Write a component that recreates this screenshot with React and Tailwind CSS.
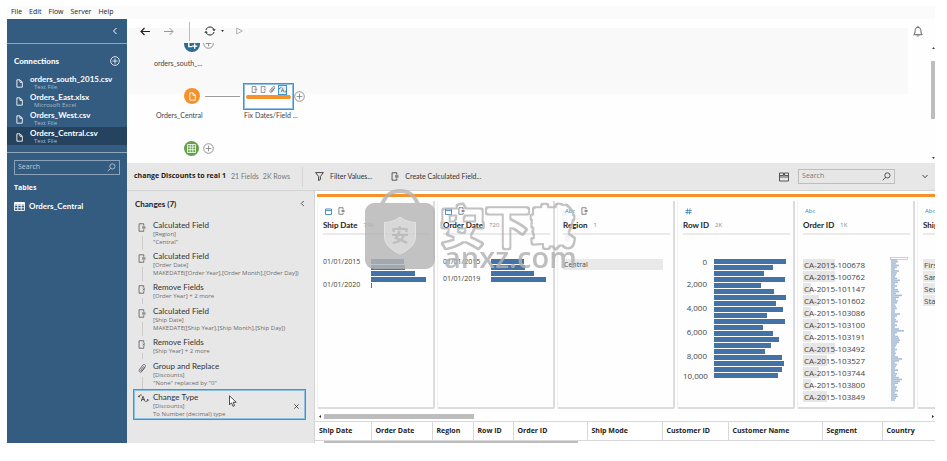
import React from "react";

const files = [
  { name: "orders_south_2015.csv", kind: "Text File" },
  { name: "Orders_East.xlsx", kind: "Microsoft Excel" },
  { name: "Orders_West.csv", kind: "Text File" },
  { name: "Orders_Central.csv", kind: "Text File", selected: true },
];

const changes = [
  { icon: "calc", title: "Calculated Field", lines: ["[Region]", '"Central"'] },
  { icon: "calc", title: "Calculated Field", lines: ["[Order Date]", "MAKEDATE([Order Year],[Order Month],[Order Day])"] },
  { icon: "remove", title: "Remove Fields", lines: ["[Order Year] + 2 more"] },
  { icon: "calc", title: "Calculated Field", lines: ["[Ship Date]", "MAKEDATE([Ship Year],[Ship Month],[Ship Day])"] },
  { icon: "remove", title: "Remove Fields", lines: ["[Ship Year] + 2 more"] },
  { icon: "clip", title: "Group and Replace", lines: ["[Discounts]", '"None" replaced by "0"'] },
];

const rowIdBars = [72, 59, 50, 71, 47, 60, 72, 62, 69, 53, 71, 49, 59, 65, 57, 51, 68, 70, 68, 64];
const rowIdLabels = [
  ["0", "mt-0"],
  ["2,000", "mt-[12px]"],
  ["4,000", "mt-[14px]"],
  ["6,000", "mt-[14px]"],
  ["8,000", "mt-[14px]"],
  ["10,000", "mt-[10px]"],
];

const orderIds = [
  ["CA-2015-100678", 32],
  ["CA-2015-100762", 32],
  ["CA-2015-101147", 8],
  ["CA-2015-101602", 16],
  ["CA-2015-103086", 8],
  ["CA-2015-103100", 16],
  ["CA-2015-103191", 8],
  ["CA-2015-103492", 32],
  ["CA-2015-103527", 24],
  ["CA-2015-103744", 16],
  ["CA-2015-103800", 8],
  ["CA-2015-103849", 24],
];

const overview = [
  6, 7, 5, 8, 6, 4, 8, 6, 5, 4, 6, 9, 7, 4, 6, 3, 7, 8, 5, 11, 8, 5, 7, 6, 3, 5, 6, 4, 3, 9, 6, 4, 5, 7, 4, 6, 4, 8, 13, 6, 4, 7,
  8, 9, 8, 6, 5, 4, 6, 3, 5, 4, 7, 11, 8, 4, 6, 5, 3, 7, 4, 6, 5, 8, 11, 9, 7, 4, 6, 5, 7, 4, 6, 7, 5, 4,
];

const tableColumns = [
  ["Ship Date", "w-[56px]"],
  ["Order Date", "w-[61px]"],
  ["Region", "w-[41px]"],
  ["Row ID", "w-[40px]"],
  ["Order ID", "w-[74px]"],
  ["Ship Mode", "w-[75px]"],
  ["Customer ID", "w-[66px]"],
  ["Customer Name", "w-[94px]"],
  ["Segment", "w-[60px]"],
  ["Country", ""],
];

function FileIcon({ className = "" }) {
  return (
    <svg className={className} viewBox="0 0 8 10" fill="none" stroke="currentColor" strokeWidth="1">
      <path d="M1 .8h3.6L7.2 3.4v5.8H1z" />
      <path d="M4.5 1v2.6H7" />
    </svg>
  );
}

function CalcIcon({ className = "", remove = false }) {
  return (
    <svg className={className} viewBox="0 0 9 10" fill="none" stroke="currentColor" strokeWidth=".9">
      <path d="M6.5 3V.8H1.2v8.4h5.3V7" />
      {remove ? <path d="M5.2 3.7l2.6 2.6M7.8 3.7L5.2 6.3" /> : <path d="M4.6 5.6h3.8M4.6 4.3h3.8" />}
    </svg>
  );
}

function ClipIcon({ className = "" }) {
  return (
    <svg className={className} viewBox="0 0 10 10" fill="none" stroke="currentColor" strokeWidth=".9" strokeLinecap="round">
      <path d="M7.6 3.8L4.4 8.2C3.7 9.2 2.5 9.4 1.8 8.800S1 7 1.700 6l3.600-4.800C5.900.4 7 .3 7.700.8s.7 1.500.2 2.300L4.600 7.500c-.4.500-1 .6-1.300.3s-.3-.8 0-1.200L6 2.900" />
    </svg>
  );
}

function TypeIcon({ className = "" }) {
  return (
    <svg className={className} viewBox="0 0 12 10" fill="none" stroke="currentColor" strokeWidth=".9">
      <path d="M3.500 8L5.400 2.500 7.600 8M4.200 6.200h2.700M.8 3.200C1.200 1.300 2.800.6 4.200 1.300M10.800 6.200c0 1.600-1 2.400-2.600 2.300M.4 2l.5 1.400 1.200-.7M11.500 7.300l-.6-1.200-1.200.8" />
    </svg>
  );
}

function PlusCircle({ className = "" }) {
  return (
    <svg className={className} viewBox="0 0 11 11" fill="none" stroke="currentColor" strokeWidth=".9">
      <circle cx="5.500" cy="5.500" r="4.800" />
      <path d="M5.500 2.700v5.600M2.700 5.500h5.600" />
    </svg>
  );
}

function SearchIcon({ className = "" }) {
  return (
    <svg className={className} viewBox="0 0 10 10" fill="none" stroke="currentColor" strokeWidth=".9">
      <circle cx="6" cy="3.800" r="2.900" />
      <path d="M3.900 5.900L.8 9.200" />
    </svg>
  );
}

function Chevron({ className = "" }) {
  return (
    <svg className={className} viewBox="0 0 6 8" fill="none" stroke="currentColor" strokeWidth="1">
      <path d="M4.500 1L1.500 4l3 3" />
    </svg>
  );
}

function CalendarIcon() {
  return (
    <svg className="h-[7px] w-[7px] text-[#3d85b5]" viewBox="0 0 7 7" fill="none" stroke="currentColor" strokeWidth=".9">
      <path d="M.5 1h6v5.500h-6z" />
      <path d="M.5 2.600h6" />
    </svg>
  );
}

function Sidebar() {
  return (
    <aside className="flex w-[120px] shrink-0 flex-col bg-[#345b80] text-white">
      <div className="flex h-[25px] items-center justify-end border-b border-[#8fa6bb] pr-[9px]">
        <button aria-label="Collapse connections">
          <Chevron className="h-[8px] w-[6px]" />
        </button>
      </div>
      <div className="flex h-[34px] items-center justify-between pr-[7px] pl-[7px]">
        <h2 className="text-[8px] font-black">Connections</h2>
        <button aria-label="Add connection">
          <PlusCircle className="h-[10px] w-[10px]" />
        </button>
      </div>
      <ul className="-mt-[5px]">
        {files.map((f) => (
          <li key={f.name}>
            <button className={`flex h-[18px] w-full items-center gap-[7px] pl-[9px] text-left ${f.selected ? "bg-[#25425e]" : ""}`}>
              <FileIcon className="mt-[2px] h-[9px] w-[7px]" />
              <span className="flex flex-col pt-px">
                <span className="text-[8px] leading-[9px] font-bold">{f.name}</span>
                <span className="pl-[4px] font-['Open_Sans',sans-serif] text-[6px] leading-[7px] text-[#a9bccd]">{f.kind}</span>
              </span>
            </button>
          </li>
        ))}
      </ul>
      <div className="mt-[7px] border-t border-[#8fa6bb] px-[7px] pt-[7px]">
        <label className="flex h-[15px] items-center border border-[#8ba3b9] px-[3px]">
          <input aria-label="Search tables" placeholder="Search" className="w-full min-w-0 bg-transparent font-['Open_Sans',sans-serif] text-[7px] outline-none placeholder:text-[#c0cdd9]" />
          <SearchIcon className="h-[9px] w-[9px] shrink-0 text-[#c0cdd9]" />
        </label>
        <h2 className="mt-[8px] font-['Open_Sans',sans-serif] text-[7px] leading-[10px] font-bold">Tables</h2>
        <button className="mt-[8px] flex items-center gap-[4px]">
          <svg className="h-[9px] w-[11px]" viewBox="0 0 11 9" fill="none" stroke="white" strokeWidth=".9">
            <path d="M.5.500h10v8H.5zM.5 3.200h10M.5 5.800h10M3.800 2v6.500M7.200 2v6.500" />
            <path d="M.5 1.500h10" strokeWidth="2" />
          </svg>
          <span className="text-[8px] leading-[10px] font-bold">Orders_Central</span>
        </button>
      </div>
    </aside>
  );
}

function FlowCanvas() {
  return (
    <div className="relative grow overflow-hidden">
      <div className="absolute -top-[7px] left-[57px] h-[16px] w-[16px] rounded-full bg-[#2c6c95] text-white">
        <svg className="h-[16px] w-[16px]" viewBox="0 0 15 15" fill="none" stroke="currentColor" strokeWidth="1.300">
          <path d="M4.500 5v5h3M10 7v5M7.500 9.500h5" />
        </svg>
      </div>
      <PlusCircle className="absolute -top-[5px] left-[76px] h-[11px] w-[11px] text-[#888]" />
      <span className="absolute top-[15px] left-[27px] text-[7px] leading-[10px] text-[#444]">orders_south_...</span>

      <div className="absolute top-[45px] left-[57px] flex h-[16px] w-[16px] items-center justify-center rounded-full bg-[#f7922b] text-white">
        <FileIcon className="h-[9px] w-[7px]" />
      </div>
      <div className="absolute top-[53px] left-[78px] h-px w-[35px] bg-[#9b9b9b]" />
      <span className="absolute top-[67px] left-[29px] text-[7px] leading-[10px] text-[#444]">Orders_Central</span>

      <div className="absolute top-[40px] left-[116px] h-[27px] w-[51px] border border-[#3d95d8] bg-white outline outline-[#8cc1e8] -outline-offset-2">
        <div className="flex h-[11px] items-center justify-end gap-[2px] pr-[6px] text-[#555]">
          <CalcIcon className="h-[7px] w-[7px]" />
          <CalcIcon className="h-[7px] w-[7px]" remove />
          <ClipIcon className="h-[7px] w-[7px]" />
          <span className="flex h-[10px] w-[9px] items-center justify-center border border-[#3d95d8] bg-[#e5f1fa]">
            <TypeIcon className="h-[8px] w-[8px] shrink-0" />
          </span>
        </div>
        <div className="mx-[2px] h-[4px] rounded-full bg-[#f7922b]" />
      </div>
      <PlusCircle className="absolute top-[48px] left-[167px] h-[11px] w-[11px] text-[#888]" />
      <span className="absolute top-[67px] left-[117px] text-[7px] leading-[10px] text-[#444]">Fix Dates/Field ...</span>

      <div className="absolute top-[98px] left-[57px] flex h-[15px] w-[15px] items-center justify-center rounded-full bg-[#65a14a]">
        <svg className="h-[9px] w-[9px]" viewBox="0 0 9 9" fill="none" stroke="white" strokeWidth=".8">
          <path d="M.500.500h8v8h-8zM.5 3h8M.5 5.700h8M3.200.5v8M5.800.5v8" />
        </svg>
      </div>
      <PlusCircle className="absolute top-[100px] left-[76px] h-[11px] w-[11px] text-[#888]" />
    </div>
  );
}

function FlowPane() {
  return (
    <section className="relative flex h-[144px] flex-col overflow-hidden bg-[#fefefe]">
      <div className="absolute top-[9px] right-[27px] left-0 h-[66px] bg-[#f9f9f9]" />
      <div className="relative flex h-[24px] shrink-0 items-center pr-[12px] pl-[13px] text-[#222]">
        <button aria-label="Back">
          <svg className="h-[9px] w-[10px]" viewBox="0 0 10 9" fill="none" stroke="currentColor" strokeWidth="1.200">
            <path d="M10 4.500H1M4.500 1L1 4.500 4.500 8" />
          </svg>
        </button>
        <button aria-label="Forward" className="ml-[14px] text-[#999]">
          <svg className="h-[9px] w-[10px]" viewBox="0 0 10 9" fill="none" stroke="currentColor" strokeWidth="1">
            <path d="M0 4.500h9M5.500 1L9 4.500 5.500 8" />
          </svg>
        </button>
        <span className="ml-[15px] h-[19px] w-px bg-[#bbb]" />
        <button aria-label="Refresh" className="ml-[14px] flex items-center gap-[5px]">
          <svg className="h-[10px] w-[12px]" viewBox="0 0 12 10" fill="none" stroke="currentColor" strokeWidth="1">
            <path d="M2 4C2.300 2.200 4 1 6 1c1.700 0 3.300.9 3.900 2.500M10 6C9.700 7.800 8 9 6 9 4.300 9 2.700 8.100 2.100 6.500" />
            <path d="M8.300 3.300h3.400L10 5.200zM.3 6.700h3.400L2 4.800z" fill="currentColor" stroke="none" />
          </svg>
          <svg className="h-[2px] w-[3px]" viewBox="0 0 4 3"><path d="M0 0h4L2 3z" fill="currentColor" /></svg>
        </button>
        <button aria-label="Run flow" className="ml-[12px] text-[#aaa]">
          <svg className="h-[8px] w-[7px]" viewBox="0 0 7 8" fill="none" stroke="currentColor" strokeWidth=".9">
            <path d="M.7 1l5.600 3-5.600 3z" />
          </svg>
        </button>
        <button aria-label="Alerts" className="ml-auto text-[#555]">
          <svg className="h-[11px] w-[10px]" viewBox="0 0 10 11" fill="none" stroke="currentColor" strokeWidth=".9">
            <path d="M.7 8.700C2 7.800 2 6.500 2.100 4.600 2.200 2.500 3.300 1.300 5 1.300s2.800 1.200 2.900 3.300c.1 1.900.1 3.200 1.400 4.100zM4 9.500c.3.900 1.700.9 2 0M5 0v1.300" />
          </svg>
        </button>
      </div>
      <FlowCanvas />
      <div className="absolute top-[28px] right-0 bottom-[4px] flex w-[4px] flex-col items-center justify-between">
        <svg className="h-[2px] w-[3px]" viewBox="0 0 4 3"><path d="M0 3h4L2 0z" fill="#333" /></svg>
        <div className="mb-[26px] h-[58px] w-[4px] bg-[#bdbdbd]" />
        <svg className="h-[2px] w-[3px]" viewBox="0 0 4 3"><path d="M0 0h4L2 3z" fill="#333" /></svg>
      </div>
    </section>
  );
}

function ProfileToolbar() {
  return (
    <div className="flex h-[28px] items-center border-b border-[#d3d3d3] bg-[#e7e7e7] pr-[7px] pl-[7px] text-[7px] text-[#333]">
      <div className="flex w-[168px] items-center whitespace-nowrap">
        <h1 className="w-[97px] font-['Open_Sans',sans-serif] font-bold text-[#222]">change Discounts to real 1</h1>
        <span className="text-[#777]">21 Fields</span>
        <span className="ml-[4px] text-[#777]">2K Rows</span>
      </div>
      <div className="flex h-[20px] grow items-center border-l border-[#d6d6d6] pl-[12px]">
        <button className="flex items-center gap-[6px]">
          <svg className="h-[9px] w-[9px]" viewBox="0 0 9 9" fill="none" stroke="currentColor" strokeWidth=".9">
            <path d="M.6.600h7.800L5.400 4.500v3L3.600 8.600V4.500z" />
          </svg>
          Filter Values...
        </button>
        <button className="ml-[19px] flex items-center gap-[6px]">
          <CalcIcon className="h-[9px] w-[8px]" />
          Create Calculated Field...
        </button>
      </div>
      <button aria-label="View options">
        <svg className="h-[10px] w-[10px]" viewBox="0 0 10 10" fill="none" stroke="currentColor" strokeWidth=".8">
          <path d="M.5 1h4v2.500h-4zM5.500 1h4v2.500h-4zM.5 5h9v4h-9zM.5 3.500V5M9.500 3.500V5" />
        </svg>
      </button>
      <label className="ml-[9px] flex h-[15px] w-[97px] items-center border border-[#bdbdbd] px-[3px]">
        <input aria-label="Search fields" placeholder="Search" className="w-full min-w-0 bg-transparent font-['Open_Sans',sans-serif] text-[7px] outline-none placeholder:text-[#777]" />
        <SearchIcon className="h-[9px] w-[9px] shrink-0" />
      </label>
      <button aria-label="Expand" className="ml-[27px]">
        <svg className="h-[5px] w-[6px]" viewBox="0 0 6 5" fill="none" stroke="currentColor" strokeWidth=".9"><path d="M.5 1L3 3.700 5.500 1" /></svg>
      </button>
    </div>
  );
}

function ChangeIcon({ type }) {
  if (type === "clip") return <ClipIcon className="h-[9px] w-[9px]" />;
  return <CalcIcon className="h-[9px] w-[8px]" remove={type === "remove"} />;
}

function Detail({ children }) {
  return <p className="font-['Open_Sans',sans-serif] text-[6px] leading-[8px] whitespace-nowrap text-[#6d6d6d]">{children}</p>;
}

function ChangesPane() {
  return (
    <aside className="w-[188px] shrink-0 border-r border-[#d3d3d3] bg-[#e7e7e7] pl-[6px]">
      <div className="flex h-[25px] items-center justify-between pr-[9px] pl-[2px]">
        <h2 className="text-[8px] font-bold text-[#222]">Changes (7)</h2>
        <button aria-label="Collapse changes"><Chevron className="h-[7px] w-[5px] text-[#333]" /></button>
      </div>
      <ol className="pt-[5px] text-[#333]">
        {changes.map((c, i) => (
          <li key={i} className={`flex gap-[7px] pl-[5px] ${c.lines.length > 1 ? "pb-[6px]" : "pb-[7px]"}`}>
            <span className="flex w-[8px] flex-col items-center gap-[4px] pt-[2px] text-[#555]">
              <ChangeIcon type={c.icon} />
              <span className="-mb-[4px] w-px grow bg-[#cbcbcb]" />
            </span>
            <div>
              <h3 className="text-[8px] leading-[9px]">{c.title}</h3>
              {c.lines.map((l) => (
                <Detail key={l}>{l}</Detail>
              ))}
            </div>
          </li>
        ))}
        <li className="relative -mt-[4px] mr-[8px] flex h-[31px] items-start gap-[4px] border border-[#3d95d8] pt-[3px] pl-[4px] outline outline-[#8cc1e8] -outline-offset-2">
          <TypeIcon className="mt-px h-[9px] w-[11px]" />
          <div className="grow">
            <h3 className="text-[8px] leading-[9px]">Change Type</h3>
            <Detail>[Discounts]</Detail>
            <Detail>To Number (decimal) type</Detail>
          </div>
          <button aria-label="Remove change" className="mr-[6px] self-center">
            <svg className="h-[5px] w-[5px]" viewBox="0 0 5 5" stroke="currentColor" strokeWidth=".8"><path d="M.3.300l4.400 4.400M4.700.3L.3 4.700" /></svg>
          </button>
          <svg className="absolute top-[5px] left-[95px] h-[12px] w-[8px]" viewBox="0 0 8 12" fill="white" stroke="#222" strokeWidth=".8">
            <path d="M.5.800v9l2-2 1.500 3.500 1.600-.7L4.200 7.300h3z" />
          </svg>
        </li>
      </ol>
    </aside>
  );
}

function Card({ type, calc, title, count, children }) {
  return (
    <article className="h-[208px] w-[118px] shrink-0 rounded-b-[2px] border-r-2 border-b-2 border-l border-[#dcdcdc] border-l-[#f1f1f1] bg-[#fefefe] pt-[6px] pr-[3px] pl-[5px]">
      <div className="flex h-[8px] items-center gap-[6px] pl-[2px]">
        {type === "date" && <CalendarIcon />}
        {type === "text" && <span className="font-['Open_Sans',sans-serif] text-[6px] leading-[8px] text-[#3d85b5]">Abc</span>}
        {type === "number" && (
          <svg className="h-[7px] w-[7px]" viewBox="0 0 7 7" stroke="#3d85b5" strokeWidth=".8"><path d="M2.500.5L2 6.500M5 .5l-.5 6M.5 2.500h6.300M.2 4.500h6.300" /></svg>
        )}
        {calc && <CalcIcon className="h-[8px] w-[7px] text-[#555]" />}
      </div>
      <div className="mt-[4px] flex h-[16px] items-start gap-[6px] border-b-2 border-[#eaeaea] whitespace-nowrap">
        <h3 className="text-[8px] leading-[12px] font-bold text-[#222]">{title}</h3>
        <span className="font-['Open_Sans',sans-serif] text-[6px] leading-[12px] text-[#888]">{count}</span>
      </div>
      <div className="font-['Open_Sans',sans-serif]">{children}</div>
    </article>
  );
}

function DateBars({ labels, bars, gap }) {
  return (
    <div className="flex justify-between pt-[22px]">
      <div className={`flex flex-col ${gap}`}>
        {labels.map((l) => (
          <span key={l} className="text-[7px] leading-[10px] text-[#444]">{l}</span>
        ))}
      </div>
      <div className="mt-[2px] flex w-[59px] flex-col gap-px">
        {bars.map((w, i) => (
          <div key={i} className="h-[5px] bg-[#4373a6]" style={{ width: w }} />
        ))}
      </div>
    </div>
  );
}

function Cards() {
  return (
    <div className="flex gap-[2px] overflow-hidden pt-[4px]">
      <Card type="date" calc title="Ship Date" count="746">
        <DateBars labels={["01/01/2015", "01/01/2020"]} bars={[33, 34, 44, 55, 1]} gap="gap-[13px]" />
      </Card>
      <Card type="date" calc title="Order Date" count="720">
        <DateBars labels={["01/01/2015", "01/01/2019"]} bars={[33, 34, 43, 55]} gap="gap-[7px]" />
      </Card>
      <Card type="text" calc title="Region" count="1">
        <div className="mt-[24px] mr-[7px] bg-[#e9e9e9] pl-px text-[7px] leading-[11px] text-[#444]">Central</div>
      </Card>
      <Card type="number" title="Row ID" count="2K">
        <div className="flex gap-[7px] pt-[20px]">
          <div className="flex w-[24px] flex-col pt-[2px] text-right text-[8px] leading-[10px] text-[#444]">
            {rowIdLabels.map(([l, space]) => (
              <span key={l} className={space}>{l}</span>
            ))}
          </div>
          <div className="mt-[4px] flex flex-col gap-px">
            {rowIdBars.map((w, i) => (
              <div key={i} className="h-[5px] bg-[#4373a6]" style={{ width: w }} />
            ))}
          </div>
        </div>
      </Card>
      <Card type="text" title="Order ID" count="1K">
        <div className="flex justify-between pt-[24px]">
          <ul className="flex flex-col gap-px text-[8px] leading-[11px] text-[#444]">
            {orderIds.map(([id, w]) => (
              <li key={id} className="relative isolate pl-px">
                <span className="absolute inset-y-0 left-0 -z-10 bg-[#e6e6e6]" style={{ width: w }} />
                {id}
              </li>
            ))}
          </ul>
          <svg className="-mt-[2px] h-[145px] w-[20px]" viewBox="0 0 20 145">
            {overview.map((w, i) => (
              <rect key={i} x="1" y={2 + i * 1.87} width={w} height="1.600" fill="#a9bdd6" />
            ))}
            <rect x="1" y="2" width="4" height="142" fill="#b9c9dd" />
            <rect x=".5" y=".5" width="17" height="2" fill="none" stroke="#bbb" strokeWidth=".7" />
          </svg>
        </div>
      </Card>
      <Card type="text" title="Ship Mode" count="4">
        <ul className="flex flex-col gap-px pt-[24px] text-[8px] leading-[11px] whitespace-nowrap text-[#444]">
          {["First Class", "Same Day", "Second Class", "Standard Class"].map((s) => (
            <li key={s} className="bg-[#e9e9e9] pl-px">{s}</li>
          ))}
        </ul>
      </Card>
    </div>
  );
}

function Watermark() {
  return (
    <svg className="pointer-events-none absolute -top-[2px] left-[49px] h-[92px] w-[220px]" viewBox="0 0 220 92">
      <defs>
        <filter id="ring" x="-5%" y="-10%" width="110%" height="120%">
          <feMorphology in="SourceGraphic" operator="erode" radius="1.500" result="inner" />
          <feComposite in="SourceGraphic" in2="inner" operator="out" />
        </filter>
      </defs>
      <g opacity=".82">
        <path d="M18 15C23 4 29 2 36 2s13 2 18 13" fill="none" stroke="#b5b5b5" strokeWidth="4" />
        <rect x="1" y="14" width="70" height="66" rx="9" fill="#b5b5b5" />
        <path d="M36 28c5 4 10 5 15.500 5.500V47c0 9-7 14-15.500 18-8.500-4-15.500-9-15.500-18V33.500C26 33 31 32 36 28z" fill="#d0d0d0" stroke="#dedede" />
        <text x="36" y="53" textAnchor="middle" fontSize="18" fontWeight="700" fill="#b0b0b0" fontFamily="'Noto Sans CJK SC', sans-serif">安</text>
        <g filter="url(#ring)">
          <text x="76" y="55" fontSize="45" fontWeight="500" fill="#b5b5b5" stroke="#b5b5b5" strokeWidth="5" strokeLinejoin="round" fontFamily="'Noto Sans CJK SC', sans-serif">安下载</text>
        </g>
        <text x="80" y="79" fontSize="29" fontWeight="600" fill="#b0b0b0" fontFamily="'Open Sans', sans-serif">anxz.com</text>
      </g>
    </svg>
  );
}

export default function App() {
  return (
    <div className="flex min-h-screen flex-col bg-white pt-[6px] pr-[12px] pb-[18px] pl-[7px] font-['Lato','Noto_Sans_CJK_SC',sans-serif]">
      <nav className="flex h-[13px] items-center gap-[7px] bg-[#fbfbfb] pl-[4px] font-['Open_Sans',sans-serif] text-[7px] text-[#222]">
        {["File", "Edit", "Flow", "Server", "Help"].map((m) => (
          <button key={m}>{m}</button>
        ))}
      </nav>
      <div className="flex grow">
        <Sidebar />
        <main className="flex min-w-0 grow flex-col">
          <FlowPane />
          <ProfileToolbar />
          <div className="flex grow">
            <ChangesPane />
            <section className="relative flex min-w-0 grow flex-col pt-[3px]">
              <div className="ml-[2px] h-[3px] bg-[#f7922b]" />
              <div className="pl-[2px]"><Cards /></div>
              <div className="flex h-[12px] items-center gap-[3px] pt-[2px] pr-px pl-[4px]">
                <svg className="h-[3px] w-[2px]" viewBox="0 0 2 3"><path d="M2 0v3L0 1.500z" fill="#222" /></svg>
                <div className="h-[5px] w-[150px] bg-[#bdbdbd]" />
                <svg className="ml-auto h-[3px] w-[2px]" viewBox="0 0 2 3"><path d="M0 0v3l2-1.500z" fill="#222" /></svg>
              </div>
              <table className="w-full table-fixed border-collapse border-y border-[#d8d8d8]">
                <thead>
                  <tr className="h-[19px]">
                    {tableColumns.map(([name, width]) => (
                      <th key={name} className={`border-r border-[#d8d8d8] p-0 pl-[4px] text-left font-['Open_Sans',sans-serif] text-[7px] font-bold whitespace-nowrap text-[#222] last:border-r-0 ${width}`}>
                        {name}
                      </th>
                    ))}
                  </tr>
                </thead>
              </table>
              <div className="ml-[9px] h-[2px] w-[254px] bg-[#bdbdbd]" />
              <Watermark />
            </section>
          </div>
        </main>
      </div>
    </div>
  );
}
